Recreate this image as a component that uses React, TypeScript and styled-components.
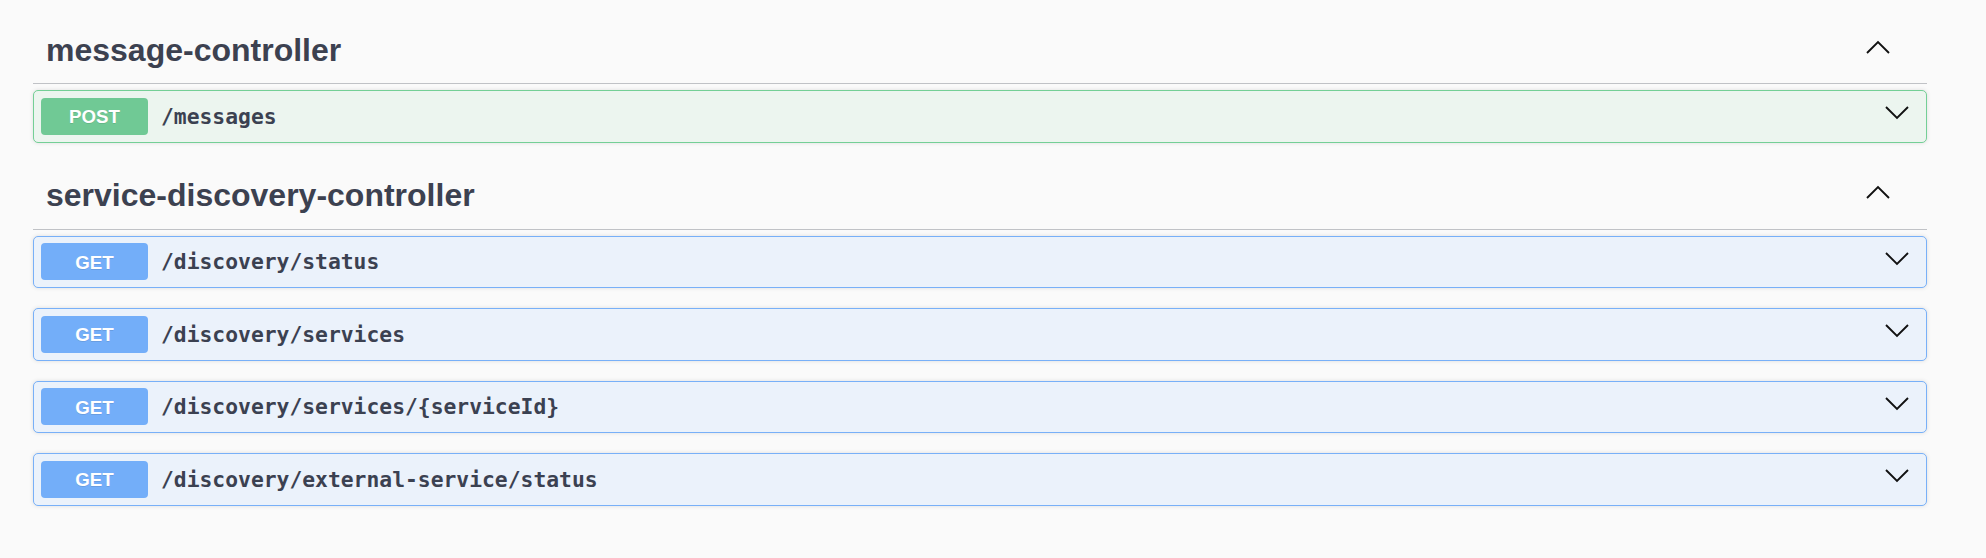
import React from 'react';
import styled, { createGlobalStyle } from 'styled-components';

// types
type Method = 'get' | 'post';

interface operation {
  method: Method,
  path: string,
}
interface tag {
  name: string,
  operations: operation[],
}

const palette: Record<Method, { badge: string, border: string, bg: string }> = {
  get: { badge: '#73aef9', border: '#78b0f8', bg: '#ebf2fb' },
  post: { badge: '#70c995', border: '#74cf96', bg: '#ecf5ef' },
};

const tags: tag[] = [
  {
    name: 'message-controller',
    operations: [{ method: 'post', path: '/messages' }],
  },
  {
    name: 'service-discovery-controller',
    operations: [
      { method: 'get', path: '/discovery/status' },
      { method: 'get', path: '/discovery/services' },
      { method: 'get', path: '/discovery/services/{serviceId}' },
      { method: 'get', path: '/discovery/external-service/status' },
    ],
  },
];

const GlobalStyle = createGlobalStyle`
  html, body {
    margin: 0;
    padding: 0;
    background: #fafafa;
  }
`

// layout
const Wrapper = styled.div`
  padding: 17px 59px 40px 33px;
  font-family: "Liberation Sans", Arial, sans-serif;
`
const TagSection = styled.section`
  display: flex;
  flex-direction: column;
`
const TagHeader = styled.h3`
  display: flex;
  align-items: center;
  justify-content: space-between;
  box-sizing: border-box;
  height: 67px;
  margin: 0 0 6px;
  padding: 0 37px 0 13px;
  border-bottom: 1px solid rgba(59, 65, 81, 0.3);
  color: #3c4150;
  font-size: 32px;
  font-weight: 700;
  cursor: pointer;
`
const ArrowButton = styled.button<{ $shift: number }>`
  display: flex;
  padding: 0;
  margin: 0 0 ${p => p.$shift}px;
  border: none;
  background: none;
  cursor: pointer;
`
const OpBlock = styled.div<{ $method: Method }>`
  display: flex;
  align-items: center;
  box-sizing: border-box;
  height: 52.5px;
  margin: 0 0 20px;
  padding: 0 17px 0 7px;
  border: 1px solid ${p => palette[p.$method].border};
  border-radius: 5px;
  background: ${p => palette[p.$method].bg};
  box-shadow: 0 0 4px rgba(0, 0, 0, 0.12);
  cursor: pointer;
`
const MethodBadge = styled.span<{ $method: Method }>`
  display: inline-flex;
  align-items: center;
  justify-content: center;
  box-sizing: border-box;
  width: 107px;
  height: 37px;
  padding-top: 2px;
  border-radius: 4px;
  background: ${p => palette[p.$method].badge};
  color: #fff;
  font-family: "Liberation Sans", Arial, sans-serif;
  font-size: 18.67px;
  font-weight: 700;
  text-shadow: 0 1px 0 rgba(0, 0, 0, 0.1);
`
const PathText = styled.span`
  flex: 1;
  padding: 0 13px;
  color: #3b4151;
  font-family: "DejaVu Sans Mono", monospace;
  font-size: 21.33px;
  font-weight: 700;
`

const Chevron = ({ up }: { up?: boolean }) => (
  <svg width="24" height="14" viewBox="0 0 24 14">
    <polyline
      points={up ? '1,13 12,2 23,13' : '1,1 12,12 23,1'}
      fill="none"
      stroke="#111"
      strokeWidth="1.9"
    />
  </svg>
)

const Operation = ({ method, path }: operation) => (
  <OpBlock $method={method}>
    <MethodBadge $method={method}>{method.toUpperCase()}</MethodBadge>
    <PathText>{path}</PathText>
    <ArrowButton $shift={6}>
      <Chevron />
    </ArrowButton>
  </OpBlock>
)

export default function App() {
  return (
    <>
      <GlobalStyle />
      <Wrapper>
        {tags.map(t => (
          <TagSection key={t.name}>
            <TagHeader>
              <span>{t.name}</span>
              <ArrowButton $shift={7}>
                <Chevron up />
              </ArrowButton>
            </TagHeader>
            {t.operations.map(op => (
              <Operation key={op.path} {...op} />
            ))}
          </TagSection>
        ))}
      </Wrapper>
    </>
  )
}
